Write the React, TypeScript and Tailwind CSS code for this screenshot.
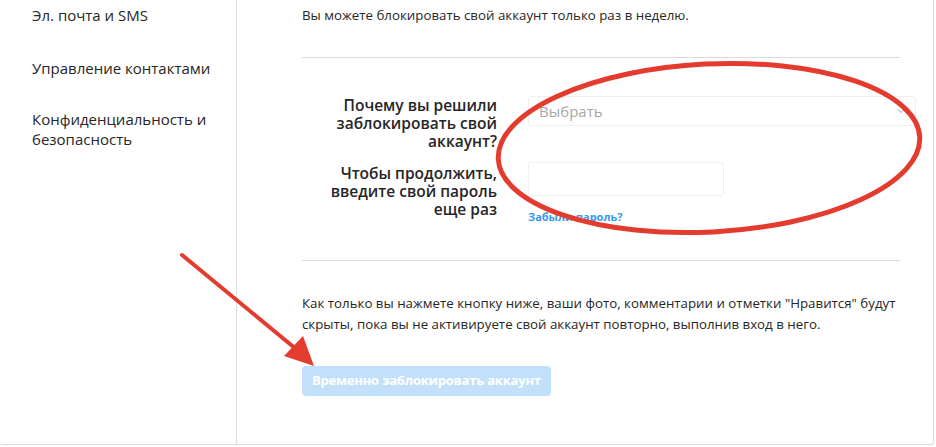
import { ChevronDown } from 'lucide-react'

const font = { fontFamily: '"Open Sans", "Noto Sans", Arial, sans-serif' }

function Annotation() {
  return (
    <svg className="pointer-events-none absolute inset-0" width="936" height="447" viewBox="0 0 936 447">
      <ellipse cx="709" cy="148" rx="211" ry="84" transform="rotate(-3 709 148)" fill="none" stroke="#e43b2f" strokeWidth="5" />
      <line x1="182" y1="255" x2="296" y2="349" stroke="#e43b2f" strokeWidth="4" strokeLinecap="round" />
      <polygon points="314,366 284,356 303,336" fill="#e43b2f" />
    </svg>
  )
}

export default function App() {
  return (
    <div className="relative h-[447px] w-[936px] overflow-hidden bg-white text-[#262626]" style={font}>
      <div className="flex h-[445px] w-[934px] rounded-b-[3px] border-r border-b border-[#dbdbdb]">
        <aside className="w-[237px] shrink-0 border-r border-[#dbdbdb] pl-8 pr-2 text-[15px] leading-5">
          <div className="pt-[5px]">Эл. почта и SMS</div>
          <div className="mt-[33px]">Управление контактами</div>
          <div className="mt-[31px]">Конфиденциальность и<br />безопасность</div>
        </aside>

        <main className="flex-1 pl-[65px] pr-[17px] text-[13.3px]">
          <p className="pt-[5px] leading-5">Вы можете блокировать свой аккаунт только раз в неделю.</p>
          <hr className="mt-[32px] mr-[16px] border-[#dbdbdb]" />

          <div className="mt-[38px] grid grid-cols-[195px_1fr] gap-x-[31px]">
            <label className="text-right text-[15.5px] font-semibold leading-[18px]">Почему вы решили заблокировать свой аккаунт?</label>
            <div>
              <div className="flex h-[30px] items-center justify-between rounded-[3px] border border-[#efefef] bg-white pl-[10px] pr-[8px] text-[#a8a8a8]">
                <span className="text-[15px]">Выбрать</span>
                <ChevronDown size={12} className="text-[#999]" />
              </div>
            </div>

            <label className="mt-[14px] text-right text-[15.5px] font-semibold leading-[18px]">Чтобы продолжить, введите свой пароль еще раз</label>
            <div className="mt-[12px]">
              <div className="h-[34px] w-[196px] rounded-[3px] border border-[#efefef] bg-white" />
              <a className="mt-[13px] block text-[11px] font-bold text-[#3897f0]">Забыли пароль?</a>
            </div>
          </div>

          <hr className="mt-[34px] mr-[16px] border-[#dbdbdb]" />

          <p className="mt-[32px] leading-[21px]">
            Как только вы нажмете кнопку ниже, ваши фото, комментарии и отметки "Нравится" будут скрыты, пока вы не активируете свой аккаунт повторно, выполнив вход в него.
          </p>

          <button className="mt-[31px] h-[30px] rounded-[4px] bg-[#c3e0fb] px-[10px] text-[13px] font-bold tracking-[-0.2px] text-white">
            Временно заблокировать аккаунт
          </button>
        </main>
      </div>
      <Annotation />
    </div>
  )
}
